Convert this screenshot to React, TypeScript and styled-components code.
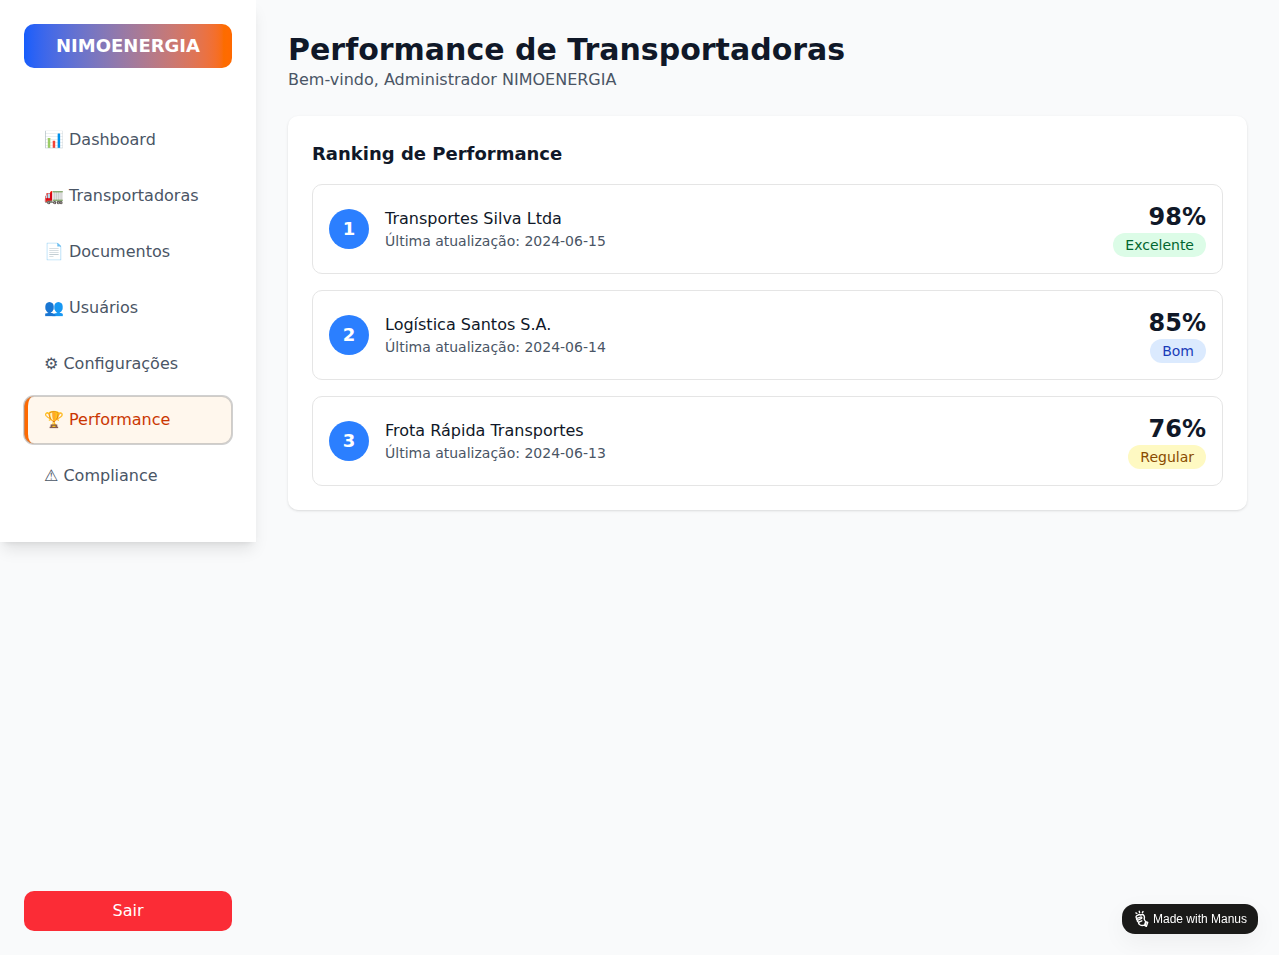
import React from 'react';
import styled, { createGlobalStyle, css } from 'styled-components';

const GlobalStyle = createGlobalStyle`
  *, *::before, *::after { box-sizing: border-box; }
  body {
    margin: 0;
    background: oklch(98.5% 0.002 247.839);
    color: oklch(21% 0.034 264.665);
    font-family: "DejaVu Sans", "Noto Color Emoji", sans-serif;
    font-size: 16px;
    line-height: 24px;
  }
  h1, h2, p { margin: 0; }
  button { font: inherit; cursor: pointer; }
`;

const Page = styled.div`
  display: flex;
  min-height: 100vh;
`;

const SideColumn = styled.div`
  display: flex;
  flex-direction: column;
  justify-content: space-between;
  flex: 0 0 256px;
`;

const Sidebar = styled.aside`
  display: flex;
  flex-direction: column;
  gap: 48px;
  padding: 24px 24px 42px;
  background: #fff;
  box-shadow: 0 10px 15px -3px rgba(0, 0, 0, 0.1), 0 4px 6px -4px rgba(0, 0, 0, 0.1);
`;

const Brand = styled.div`
  padding: 8px 16px;
  border-radius: 10px;
  background: linear-gradient(to right in oklab, oklch(54.6% 0.245 262.881), oklch(70.5% 0.213 47.604));
  color: #fff;
  font-size: 18px;
  font-weight: 700;
  line-height: 28px;
  text-align: center;
`;

const Nav = styled.nav`
  display: flex;
  flex-direction: column;
  gap: 8px;
`;

const NavItem = styled.button<{ $active?: boolean }>`
  height: 48px;
  padding: 0 16px;
  border: 0 solid transparent;
  border-left-width: 4px;
  border-radius: 10px;
  background: transparent;
  color: oklch(44.6% 0.03 256.802);
  text-align: left;
  white-space: nowrap;
  ${({ $active }) =>
    $active &&
    css`
      border-left-color: oklch(70.5% 0.213 47.604);
      background: oklch(98% 0.016 73.684);
      background: #fff7ed;
      color: oklch(55.3% 0.195 38.402);
      outline: auto 1px rgba(161, 161, 161, 0.5);
    `}
`;

const SideFooter = styled.div`
  padding: 24px;
`;

const LogoutButton = styled.button`
  display: block;
  width: 100%;
  height: 40px;
  padding: 0;
  border: 0;
  border-radius: 10px;
  background: oklch(63.7% 0.237 25.331);
  color: #fff;
`;

const Main = styled.main`
  display: flex;
  flex: 1;
  flex-direction: column;
  gap: 24px;
  padding: 32px;
`;

const Title = styled.h1`
  font-size: 30px;
  font-weight: 700;
  line-height: 36px;
`;

const Subtitle = styled.p`
  color: oklch(44.6% 0.03 256.802);
`;

const Card = styled.section`
  display: flex;
  flex-direction: column;
  gap: 16px;
  padding: 24px;
  border-radius: 10px;
  background: #fff;
  box-shadow: 0 1px 3px rgba(0, 0, 0, 0.1), 0 1px 2px -1px rgba(0, 0, 0, 0.1);
`;

const CardTitle = styled.h2`
  font-size: 18px;
  font-weight: 600;
  line-height: 28px;
`;

const Row = styled.div`
  display: flex;
  align-items: center;
  gap: 16px;
  padding: 16px;
  border: 1px solid #e5e5e5;
  border-radius: 10px;
`;

const Position = styled.div`
  display: flex;
  align-items: center;
  justify-content: center;
  width: 40px;
  height: 40px;
  border-radius: 50%;
  background: oklch(62.3% 0.214 259.815);
  color: #fff;
  font-size: 18px;
  font-weight: 700;
  line-height: 28px;
`;

const Carrier = styled.div`
  flex: 1;
`;

const Updated = styled.p`
  color: oklch(44.6% 0.03 256.802);
  font-size: 14px;
  line-height: 20px;
`;

const Result = styled.div`
  display: flex;
  flex-direction: column;
  align-items: flex-end;
`;

const Score = styled.div`
  font-size: 24px;
  font-weight: 700;
  line-height: 32px;
`;

const tones = {
  green: { bg: '#dcfce7', fg: '#016630' },
  blue: { bg: '#dbeafe', fg: '#193cb8' },
  yellow: { bg: '#fef9c2', fg: '#894b00' },
};

const Status = styled.span<{ $tone: keyof typeof tones }>`
  padding: 2px 12px;
  border-radius: 12px;
  background: ${({ $tone }) => tones[$tone].bg};
  color: ${({ $tone }) => tones[$tone].fg};
  font-size: 14px;
  line-height: 20px;
`;

const MadeWith = styled.a`
  position: fixed;
  right: 21px;
  bottom: 21px;
  display: flex;
  align-items: center;
  gap: 4px;
  width: 136px;
  height: 30px;
  padding-left: 12px;
  border-radius: 13px;
  background: #1a1a19;
  color: #fff;
  box-shadow: 0 8px 24px rgba(0, 0, 0, 0.05);
  font-family: "Liberation Sans", sans-serif;
  font-size: 12px;
  line-height: 18px;
  white-space: nowrap;
`;

const HandIcon = () => (
  <svg width="15" height="18" viewBox="0 0 15 18" fill="none" stroke="#fff" strokeWidth="1.4" strokeLinecap="round" strokeLinejoin="round">
    <path d="M1.9 2.9 2.9 3.5M5.2 1.3l.4 1.3M9 1.6l-.6 1.1" />
    <path d="M2.7 8.2C1.5 7.2 2 5.4 3.6 5.4c.9-.9 2.2-.9 3-.3 1-.6 2.7-.5 3.4.6.7 1.1.5 2.4.2 3.3.2 1.2.9 2 1.6 2.6l1.9.9-1.4 3.9-2.1-1.2c-1.8.6-3.8.3-4.8-.8-.8-.7-1-1.5-.7-2.2-1.3-.3-1.8-1.4-1.2-2.2-.9-.5-1.3-1.2-.8-1.8Z" />
    <path d="M3.6 8.2l3-1.1c1-.3 1.7.7.9 1.3L4 10.1M4.9 12.2l2.9-1.4" />
    <path d="m11.7 12.6-.6 2" strokeWidth="2" />
  </svg>
);

const menu = [
  '📊 Dashboard',
  '🚛 Transportadoras',
  '📄 Documentos',
  '👥 Usuários',
  '⚙ Configurações',
  '🏆 Performance',
  '⚠ Compliance',
];

const ranking: { name: string; date: string; score: number; status: string; tone: keyof typeof tones }[] = [
  { name: 'Transportes Silva Ltda', date: '2024-06-15', score: 98, status: 'Excelente', tone: 'green' },
  { name: 'Logística Santos S.A.', date: '2024-06-14', score: 85, status: 'Bom', tone: 'blue' },
  { name: 'Frota Rápida Transportes', date: '2024-06-13', score: 76, status: 'Regular', tone: 'yellow' },
];

export default function App() {
  return (
    <>
      <GlobalStyle />
      <Page>
        <SideColumn>
          <Sidebar>
            <Brand>NIMOENERGIA</Brand>
            <Nav>
              {menu.map((label) => (
                <NavItem key={label} $active={label.endsWith('Performance')}>
                  {label}
                </NavItem>
              ))}
            </Nav>
          </Sidebar>
          <SideFooter>
            <LogoutButton>Sair</LogoutButton>
          </SideFooter>
        </SideColumn>
        <Main>
          <header>
            <Title>Performance de Transportadoras</Title>
            <Subtitle>Bem-vindo, Administrador NIMOENERGIA</Subtitle>
          </header>
          <Card>
            <CardTitle>Ranking de Performance</CardTitle>
            {ranking.map((item, index) => (
              <Row key={item.name}>
                <Position>{index + 1}</Position>
                <Carrier>
                  <p>{item.name}</p>
                  <Updated>Última atualização: {item.date}</Updated>
                </Carrier>
                <Result>
                  <Score>{item.score}%</Score>
                  <Status $tone={item.tone}>{item.status}</Status>
                </Result>
              </Row>
            ))}
          </Card>
        </Main>
      </Page>
      <MadeWith>
        <HandIcon />
        Made with Manus
      </MadeWith>
    </>
  );
}
